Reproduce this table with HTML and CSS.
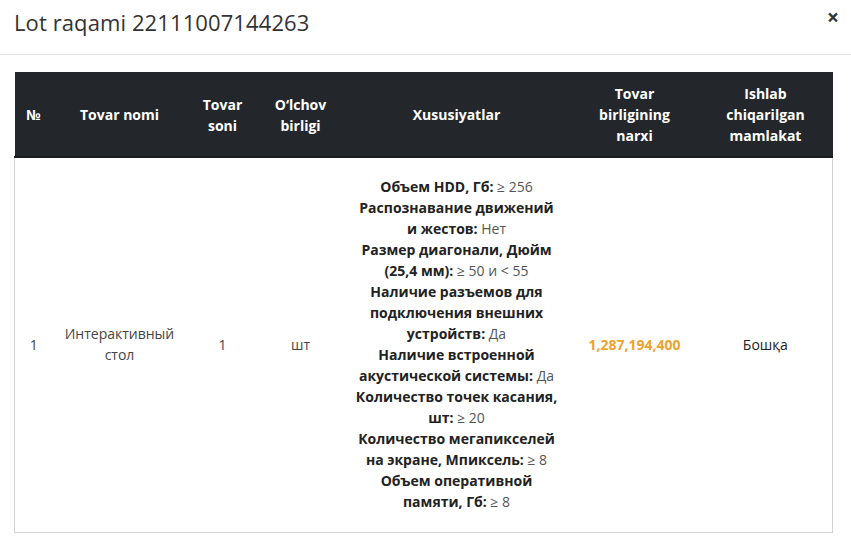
FILE: index.html
```html
<!DOCTYPE html>
<html lang="uz">
<head>
<meta charset="utf-8">
<title>Lot raqami 22111007144263</title>
<link rel="stylesheet" href="styles.css">
</head>
<body>
<div class="modal">
  <div class="modal-header">
    <h1 class="modal-title">Lot raqami 22111007144263</h1>
    <button class="close" type="button" aria-label="Close">×</button>
  </div>
  <div class="modal-body">
    <table class="lot-table">
      <colgroup>
        <col class="c-no"><col class="c-name"><col class="c-qty"><col class="c-unit"><col class="c-spec"><col class="c-price"><col class="c-country">
      </colgroup>
      <thead>
        <tr>
          <th>№</th>
          <th>Tovar nomi</th>
          <th>Tovar<br>soni</th>
          <th>O‘lchov<br>birligi</th>
          <th>Xususiyatlar</th>
          <th>Tovar<br>birligining<br>narxi</th>
          <th>Ishlab<br>chiqarilgan<br>mamlakat</th>
        </tr>
      </thead>
      <tbody>
        <tr>
          <td>1</td>
          <td>Интерактивный<br>стол</td>
          <td>1</td>
          <td>шт</td>
          <td class="spec">
            <div><b>Объем HDD, Гб:</b> ≥ 256</div>
            <div><b>Распознавание движений<br>и жестов:</b> Нет</div>
            <div><b>Размер диагонали, Дюйм<br>(25,4 мм):</b> ≥ 50 и &lt; 55</div>
            <div><b>Наличие разъемов для<br>подключения внешних<br>устройств:</b> Да</div>
            <div><b>Наличие встроенной<br>акустической системы:</b> Да</div>
            <div><b>Количество точек касания,<br>шт:</b> ≥ 20</div>
            <div><b>Количество мегапикселей<br>на экране, Мпиксель:</b> ≥ 8</div>
            <div><b>Объем оперативной<br>памяти, Гб:</b> ≥ 8</div>
          </td>
          <td class="price">1,287,194,400</td>
          <td class="country">Бошқа</td>
        </tr>
      </tbody>
    </table>
  </div>
</div>
</body>
</html>
```
FILE: styles.css
```css
* { box-sizing: border-box; }
html, body { margin: 0; padding: 0; background: #fff; }
body {
  font-family: "Open Sans", "Liberation Sans", sans-serif;
  color: #333;
  width: 851px;
  height: 553px;
  overflow: hidden;
}
.modal { background: #fff; }
.modal-header {
  display: flex;
  justify-content: space-between;
  align-items: flex-start;
  padding: 6px 12px 15px 14px;
  border-bottom: 1px solid #e3e3e3;
}
.modal-title {
  margin: 0;
  font-size: 22px;
  font-weight: 400;
  line-height: 33px;
  color: #333;
  letter-spacing: 0.1px;
}
.close {
  border: 0;
  background: none;
  padding: 0;
  font-family: "Open Sans", sans-serif;
  font-size: 21px;
  font-weight: 700;
  line-height: 22px;
  color: #333;
  cursor: pointer;
}
.modal-body {
  padding: 17px 19px 0 14px;
}
.lot-table {
  width: 818px;
  border-collapse: collapse;
  table-layout: fixed;
  font-size: 14px;
  line-height: 21px;
}
.c-no { width: 38px; }
.c-name { width: 134px; }
.c-qty { width: 72px; }
.c-unit { width: 84px; }
.c-spec { width: 228px; }
.c-price { width: 128px; }
.c-country { width: 134px; }
.lot-table th {
  background: #23272b;
  color: #fff;
  font-weight: 700;
  text-align: center;
  vertical-align: middle;
  padding: 11px 6px 10px;
  border-bottom: 2px solid #191c1f;
  height: 85px;
}
.lot-table tbody tr {
  border: 1px solid #d2d2d2;
  border-top: 0;
}
.lot-table td {
  text-align: center;
  vertical-align: middle;
  padding: 18px 6px 20px;
  color: #444;
}
.lot-table td.spec { color: #555; }
.lot-table td.spec b { color: #222; font-weight: 700; }
.lot-table td.price { color: #f0a22e; font-weight: 700; }
.lot-table td.country { color: #222; }
```
